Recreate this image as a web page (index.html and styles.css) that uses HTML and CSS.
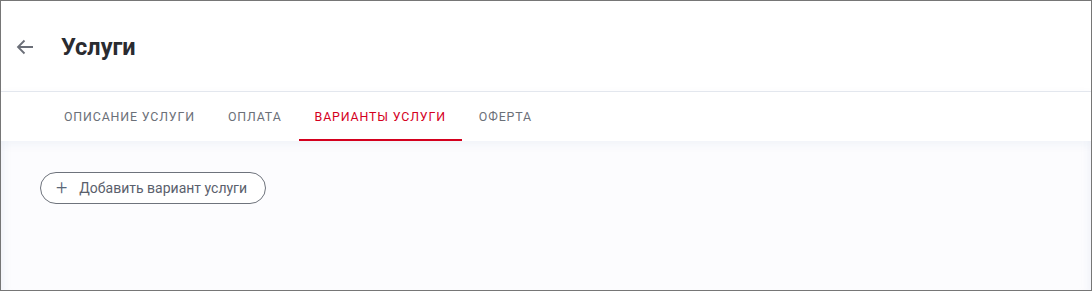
FILE: index.html
```html
<!DOCTYPE html>
<html lang="ru">
<head>
  <meta charset="UTF-8">
  <meta name="viewport" content="width=device-width, initial-scale=1">
  <title>Услуги</title>
  <link rel="stylesheet" href="styles.css">
</head>
<body>

  <div class="frame">
    <header class="page-header">
      <button class="back-btn" aria-label="Назад">
        <svg width="18" height="18" viewBox="0 0 18 18">
          <path d="M17 9H2.5M8.5 2.5L2 9l6.5 6.5" fill="none" stroke="#6b6f78" stroke-width="1.8"/>
        </svg>
      </button>
      <h1>Услуги</h1>
    </header>

    <nav class="tabs">
      <a class="tab">Описание услуги</a>
      <a class="tab">Оплата</a>
      <a class="tab active">Варианты услуги</a>
      <a class="tab">Оферта</a>
    </nav>

    <main class="content">
      <button class="add-btn">
        <span class="plus">+</span>
        Добавить вариант услуги
      </button>
    </main>
  </div>

</body>
</html>
```

FILE: styles.css
```css
* {
  box-sizing: border-box;
}

body {
  margin: 0;
  font-family: Roboto, 'Liberation Sans', sans-serif;
  background: #fff;
}

.frame {
  height: 291px;
  border: 1px solid #767676;
  display: flex;
  flex-direction: column;
  overflow: hidden;
  background: #fcfcfe;
  box-shadow: inset 10px 0 8px -8px rgba(215, 222, 240, 0.3),
              inset -10px 0 8px -8px rgba(215, 222, 240, 0.3);
}

.page-header {
  height: 91px;
  display: flex;
  align-items: center;
  padding-left: 12px;
  background: #fff;
  border-bottom: 1px solid #e6e9ef;
}

.back-btn {
  background: none;
  border: none;
  padding: 0;
  width: 24px;
  height: 24px;
  display: flex;
  align-items: center;
  justify-content: center;
  margin-top: 2px;
  cursor: pointer;
}

.page-header h1 {
  margin: 2px 0 0 24px;
  font-size: 23.5px;
  font-weight: 700;
  color: #2a2b30;
}

.tabs {
  display: flex;
  height: 49px;
  padding-left: 47px;
  background: #fff;
  box-shadow: 0 3px 10px rgba(40, 80, 150, 0.06);
  position: relative;
}

.tab {
  display: flex;
  align-items: center;
  padding: 0 16px;
  margin-right: 1px;
  font-size: 12.4px;
  letter-spacing: 0.85px;
  text-transform: uppercase;
  color: #6b7078;
  border-bottom: 2px solid transparent;
  padding-top: 2px;
  cursor: pointer;
}

.tab.active {
  color: #d4001e;
  border-bottom-color: #d4001e;
}

.content {
  flex: 1;
  padding: 31px 39px;
}

.add-btn {
  display: flex;
  align-items: center;
  height: 32px;
  padding: 0 18px 0 14px;
  border: 1px solid #6e737c;
  border-radius: 16px;
  background: #fff;
  font-family: inherit;
  font-size: 14px;
  color: #5a606c;
  cursor: pointer;
}

.plus {
  font-size: 20px;
  font-weight: 300;
  line-height: 1;
  margin-right: 12px;
  margin-left: 1px;
  color: #5a6778;
  margin-top: -2px;
}
```
